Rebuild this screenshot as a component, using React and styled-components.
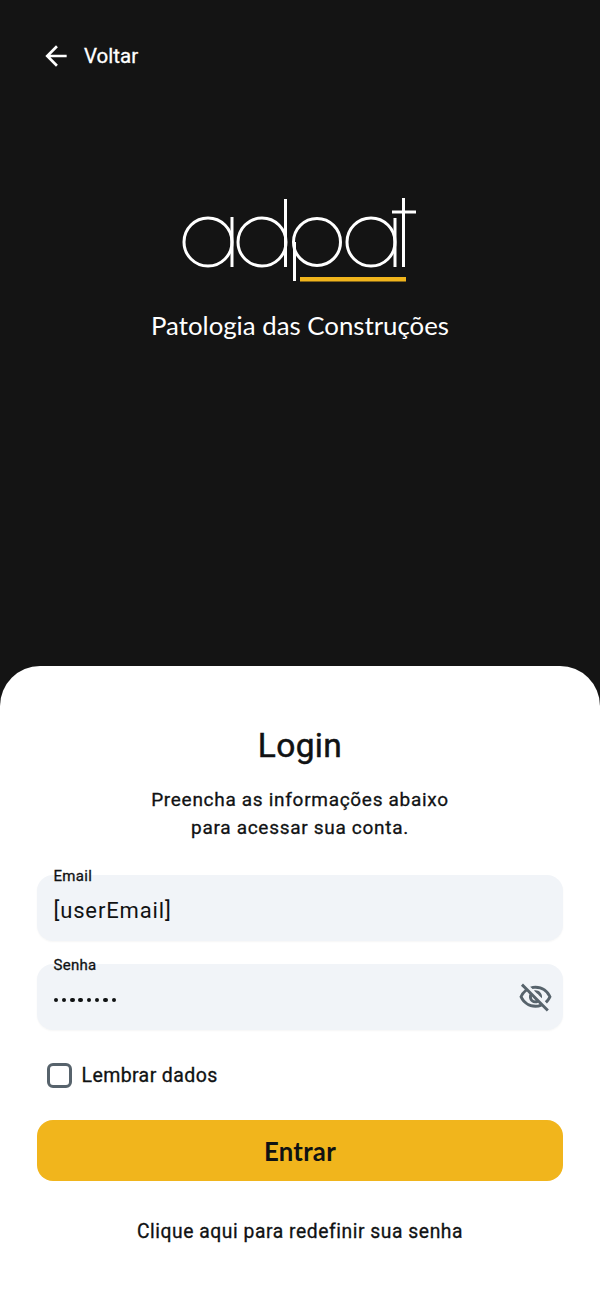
import React from 'react';
import styled, { createGlobalStyle, css } from 'styled-components';
import { MdArrowBack, MdOutlineVisibilityOff } from 'react-icons/md';

const GlobalStyle = createGlobalStyle`
  html, body {
    margin: 0;
    padding: 0;
    background: #141414;
  }
  * {
    box-sizing: border-box;
  }
`;

// the reference text sits between Roboto 400 and 500
const mediumText = css`
  font-weight: 400;
  -webkit-text-stroke: 0.3px currentColor;
`;

const Page = styled.div`
  width: 600px;
  height: 1300px;
  display: flex;
  flex-direction: column;
  background: #141414;
  font-family: Roboto, "Liberation Sans", sans-serif;
  overflow: hidden;
`;

const Hero = styled.div`
  height: 666px;
  flex-shrink: 0;
  display: flex;
  flex-direction: column;
  align-items: center;
  padding-top: 40px;
`;

const BackRow = styled.div`
  align-self: flex-start;
  display: flex;
  align-items: center;
  gap: 12px;
  height: 32px;
  padding-left: 40px;
  color: #fff;
  font-size: 20.5px;
  ${mediumText}
`;

const LogoMark = styled.svg`
  display: block;
  margin-top: 124px;
`;

const Tagline = styled.div`
  margin-top: 26px;
  color: #fff;
  font-family: Lato, sans-serif;
  font-size: 25.8px;
  line-height: 31px;
`;

const Sheet = styled.div`
  flex: 1;
  background: #fff;
  border-radius: 40px 40px 0 0;
  padding: 60px 37px 0;
  display: flex;
  flex-direction: column;
  align-items: center;
`;

const Title = styled.h1`
  margin: 0;
  color: #101213;
  font-size: 33.5px;
  line-height: 40px;
  letter-spacing: 0.35px;
  font-weight: 400;
  -webkit-text-stroke: 0.5px currentColor;
`;

const Subtitle = styled.p`
  margin: 20px 0 0;
  color: #101213;
  font-size: 19px;
  line-height: 28px;
  letter-spacing: 0.7px;
  text-align: center;
  ${mediumText}
`;

const Field = styled.div`
  position: relative;
  width: 100%;
  height: 66px;
  margin-top: ${props => props.$gap}px;
  padding: 6px 17px 0 16.5px;
  display: flex;
  align-items: center;
  justify-content: space-between;
  background: #f1f4f8;
  border-radius: 16px;
  box-shadow: 0 1px 2px rgba(20, 24, 27, 0.04);
`;

const FieldLabel = styled.span`
  position: absolute;
  left: 16.5px;
  top: -8px;
  color: #101213;
  font-size: 15px;
  line-height: 18px;
  letter-spacing: 0.3px;
  ${mediumText}
`;

const FieldValue = styled.span`
  color: #101213;
  font-size: 22px;
  font-weight: 400;
  line-height: 28px;
  letter-spacing: 0.85px;
`;

const Dots = styled.div`
  display: flex;
  gap: 3.8px;
`;

const Dot = styled.i`
  width: 4.5px;
  height: 4.5px;
  border-radius: 50%;
  background: #101213;
`;

const EyeButton = styled.div`
  display: flex;
  margin-right: -7px;
  margin-top: -6px;
  color: #57636c;
`;

const RememberRow = styled.div`
  align-self: flex-start;
  display: flex;
  align-items: center;
  gap: 10px;
  margin-top: 33px;
  padding-left: 9.5px;
`;

const CheckBox = styled.div`
  width: 25px;
  height: 25px;
  border: 3px solid #57636c;
  border-radius: 6px;
`;

const RememberLabel = styled.span`
  color: #101213;
  font-size: 19.5px;
  letter-spacing: 0.4px;
  ${mediumText}
`;

const SubmitButton = styled.button`
  width: 100%;
  height: 61px;
  margin-top: 32px;
  border: 0;
  border-radius: 16px;
  background: #f1b51c;
  color: #101213;
  font-family: Lato, sans-serif;
  font-size: 25.7px;
  font-weight: 700;
  letter-spacing: 0.3px;
`;

const ResetLink = styled.div`
  margin-top: 39px;
  color: #101213;
  font-size: 19.3px;
  line-height: 24px;
  letter-spacing: 0.55px;
  ${mediumText}
`;

// page coordinates minus the logo box origin (180, 196)
const Logo = () => (
  <LogoMark width="240" height="88" viewBox="0 0 240 88" fill="none" stroke="#fff" strokeWidth="3">
    <circle cx="28" cy="46" r="24" />
    <path d="M52 21V71" />
    <circle cx="82" cy="46" r="24" />
    <path d="M105.5 3V71" />
    <circle cx="137" cy="46" r="23.5" />
    <path d="M114.5 46V85" />
    <circle cx="191" cy="46" r="24" />
    <path d="M215 22V71M223.5 2V71M212 16H236" />
    <rect x="120" y="81" width="106" height="4.5" fill="#f1b51c" stroke="none" />
  </LogoMark>
);

const App = () => (
  <Page>
    <GlobalStyle />
    <Hero>
      <BackRow>
        <MdArrowBack size={32} />
        Voltar
      </BackRow>
      <Logo />
      <Tagline>Patologia das Construções</Tagline>
    </Hero>
    <Sheet>
      <Title>Login</Title>
      <Subtitle>
        Preencha as informações abaixo
        <br />
        para acessar sua conta.
      </Subtitle>
      <Field $gap={33}>
        <FieldLabel>Email</FieldLabel>
        <FieldValue>[userEmail]</FieldValue>
      </Field>
      <Field $gap={23}>
        <FieldLabel>Senha</FieldLabel>
        <Dots>
          {Array.from({ length: 8 }, (_, i) => <Dot key={i} />)}
        </Dots>
        <EyeButton>
          <MdOutlineVisibilityOff size={35} />
        </EyeButton>
      </Field>
      <RememberRow>
        <CheckBox />
        <RememberLabel>Lembrar dados</RememberLabel>
      </RememberRow>
      <SubmitButton>Entrar</SubmitButton>
      <ResetLink>Clique aqui para redefinir sua senha</ResetLink>
    </Sheet>
  </Page>
);

export default App;
